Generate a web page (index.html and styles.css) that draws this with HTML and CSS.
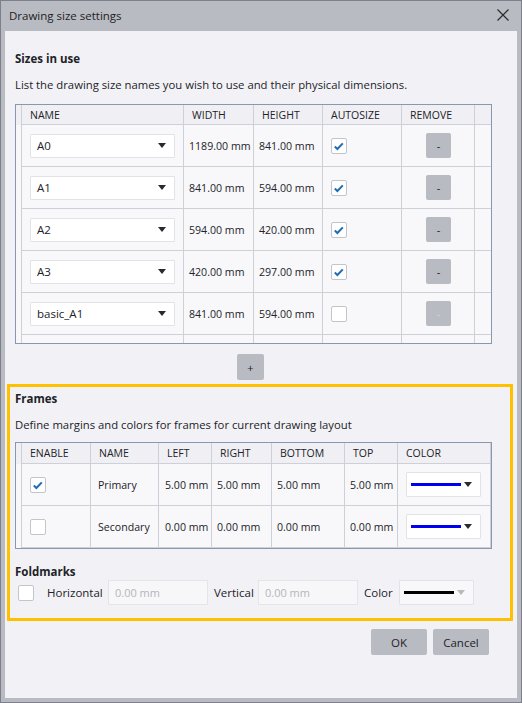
FILE: index.html
```html
<!DOCTYPE html>
<html>
<head>
<meta charset="utf-8">
<link rel="stylesheet" href="styles.css">
</head>
<body>
<div class="window">
  <div class="titlebar">
    <span class="title">Drawing size settings</span>
    <svg class="close" width="12" height="12" viewBox="0 0 12 12"><path d="M0.5 0.5 L11.5 11.5 M11.5 0.5 L0.5 11.5" stroke="#2b2b2b" stroke-width="1.2" fill="none"/></svg>
  </div>
  <div class="content">
    <h2 class="heading first">Sizes in use</h2>
    <p class="desc">List the drawing size names you wish to use and their physical dimensions.</p>

    <div class="grid sizes">
      <div class="c gut hd"></div>
      <div class="c hd">NAME</div>
      <div class="c hd">WIDTH</div>
      <div class="c hd">HEIGHT</div>
      <div class="c hd">AUTOSIZE</div>
      <div class="c hd">REMOVE</div>
      <div class="c hd end"></div>

      <div class="c gut"></div>
      <div class="c sel-cell"><div class="select"><span>A0</span><i class="caret"></i></div></div>
      <div class="c val">1189.00 mm</div>
      <div class="c val">841.00 mm</div>
      <div class="c chk-cell"><span class="chk"><svg width="16" height="16" viewBox="0 0 16 16"><path d="M3.8 8.6 L6.4 11 L11.8 5.4" stroke="#1f6db3" stroke-width="2" fill="none"/></svg></span></div>
      <div class="c btn-cell"><span class="btn rm">-</span></div>
      <div class="c end"></div>

      <div class="c gut"></div>
      <div class="c sel-cell"><div class="select"><span>A1</span><i class="caret"></i></div></div>
      <div class="c val">841.00 mm</div>
      <div class="c val">594.00 mm</div>
      <div class="c chk-cell"><span class="chk"><svg width="16" height="16" viewBox="0 0 16 16"><path d="M3.8 8.6 L6.4 11 L11.8 5.4" stroke="#1f6db3" stroke-width="2" fill="none"/></svg></span></div>
      <div class="c btn-cell"><span class="btn rm">-</span></div>
      <div class="c end"></div>

      <div class="c gut"></div>
      <div class="c sel-cell"><div class="select"><span>A2</span><i class="caret"></i></div></div>
      <div class="c val">594.00 mm</div>
      <div class="c val">420.00 mm</div>
      <div class="c chk-cell"><span class="chk"><svg width="16" height="16" viewBox="0 0 16 16"><path d="M3.8 8.6 L6.4 11 L11.8 5.4" stroke="#1f6db3" stroke-width="2" fill="none"/></svg></span></div>
      <div class="c btn-cell"><span class="btn rm">-</span></div>
      <div class="c end"></div>

      <div class="c gut"></div>
      <div class="c sel-cell"><div class="select"><span>A3</span><i class="caret"></i></div></div>
      <div class="c val">420.00 mm</div>
      <div class="c val">297.00 mm</div>
      <div class="c chk-cell"><span class="chk"><svg width="16" height="16" viewBox="0 0 16 16"><path d="M3.8 8.6 L6.4 11 L11.8 5.4" stroke="#1f6db3" stroke-width="2" fill="none"/></svg></span></div>
      <div class="c btn-cell"><span class="btn rm">-</span></div>
      <div class="c end"></div>

      <div class="c gut"></div>
      <div class="c sel-cell"><div class="select"><span>basic_A1</span><i class="caret"></i></div></div>
      <div class="c val">841.00 mm</div>
      <div class="c val">594.00 mm</div>
      <div class="c chk-cell"><span class="chk"></span></div>
      <div class="c btn-cell"><span class="btn rm disabled">-</span></div>
      <div class="c end"></div>

      <div class="c gut fill"></div>
      <div class="c fill"></div>
      <div class="c fill"></div>
      <div class="c fill"></div>
      <div class="c fill"></div>
      <div class="c fill"></div>
      <div class="c fill end"></div>
    </div>

    <div class="add-row"><span class="btn add">+</span></div>

    <div class="frames">
      <h2 class="heading">Frames</h2>
      <p class="desc">Define margins and colors for frames for current drawing layout</p>

      <div class="grid framegrid">
        <div class="c gut hd"></div>
        <div class="c hd">ENABLE</div>
        <div class="c hd">NAME</div>
        <div class="c hd">LEFT</div>
        <div class="c hd">RIGHT</div>
        <div class="c hd">BOTTOM</div>
        <div class="c hd">TOP</div>
        <div class="c hd end">COLOR</div>

        <div class="c gut"></div>
        <div class="c chk-cell"><span class="chk"><svg width="16" height="16" viewBox="0 0 16 16"><path d="M3.8 8.6 L6.4 11 L11.8 5.4" stroke="#1f6db3" stroke-width="2" fill="none"/></svg></span></div>
        <div class="c val name">Primary</div>
        <div class="c val v6">5.00 mm</div>
        <div class="c val">5.00 mm</div>
        <div class="c val">5.00 mm</div>
        <div class="c val">5.00 mm</div>
        <div class="c end color-cell"><div class="colorsel"><i class="swatch blue"></i><i class="caret"></i></div></div>

        <div class="c gut last"></div>
        <div class="c chk-cell last"><span class="chk"></span></div>
        <div class="c val name last">Secondary</div>
        <div class="c val v6 last">0.00 mm</div>
        <div class="c val last">0.00 mm</div>
        <div class="c val last">0.00 mm</div>
        <div class="c val last">0.00 mm</div>
        <div class="c end color-cell last"><div class="colorsel"><i class="swatch blue"></i><i class="caret"></i></div></div>
      </div>

      <h2 class="heading fold">Foldmarks</h2>
      <div class="foldrow">
        <span class="chk fchk"></span>
        <span class="lbl l-h">Horizontal</span>
        <span class="input">0.00 mm</span>
        <span class="lbl l-v">Vertical</span>
        <span class="input">0.00 mm</span>
        <span class="lbl l-c">Color</span>
        <div class="colorsel fsel"><i class="swatch black"></i><i class="caret light"></i></div>
      </div>
    </div>

    <div class="actions">
      <span class="btn act">OK</span>
      <span class="btn act">Cancel</span>
    </div>
  </div>
</div>
</body>
</html>
```

FILE: styles.css
```css
* { box-sizing: border-box; }
html, body { margin: 0; padding: 0; }
body {
  font-family: "Open Sans", "Noto Sans", "DejaVu Sans", sans-serif;
  font-size: 11px;
  color: #222228;
  background: #b9bbc3;
}
.window {
  width: 522px;
  height: 703px;
  border: 1px solid #7d808a;
  background: #b9bbc3;
  padding: 0 4px 4px 4px;
  display: flex;
  flex-direction: column;
}
.titlebar {
  height: 30px;
  display: flex;
  align-items: center;
  justify-content: space-between;
  padding: 0 8px 0 4px;
}
.title { font-size: 11.5px; color: #1e1e22; margin-top: -1px; }
.close { margin-top: -2px; }
.content {
  flex: 1;
  background: #f2f2f6;
  padding: 0 0 0 10px;
  display: flex;
  flex-direction: column;
}
.heading {
  margin: 0;
  font-size: 11.5px;
  font-weight: 700;
  line-height: 16px;
  height: 16px;
}
.heading.first { margin-top: 20px; }
.desc {
  margin: 10px 0 0 0;
  line-height: 16px;
  height: 16px;
  font-size: 11.3px;
  white-space: nowrap;
}
.grid {
  display: grid;
  width: 477px;
  border: 1px solid #8799b0;
  background: #f8f8fa;
}
.sizes {
  margin-top: 11px;
  grid-template-columns: 6px 162px 70px 69px 79px 73px 16px;
  grid-template-rows: 20px repeat(5, 42px) 8px;
}
.framegrid {
  margin-top: 9px;
  grid-template-columns: 6px 69px 68px 53px 60px 73px 53px 93px;
  grid-template-rows: 21px 42px 42px;
}
.c {
  border-right: 1px solid #cdd0d7;
  border-bottom: 1px solid #cdd0d7;
  display: flex;
  align-items: center;
  white-space: nowrap;
}
.c.gut { border-bottom: none; }
.c.hd {
  background: #f0f0f4;
  padding-left: 8px;
  font-size: 10.5px;
  color: #222228;
}
.c.gut.hd { padding-left: 0; }
.c.end { border-right: none; }
.framegrid .c.end { border-right: 1px solid #cdd0d7; }
.c.fill { border-bottom: none; }
.c.val { padding-left: 5px; font-size: 10.6px; }
.c.val.v6 { padding-left: 6px; }
.c.val.name { padding-left: 7px; }
.sel-cell { padding-left: 8px; }
.select {
  width: 145px;
  height: 24px;
  background: #fff;
  border: 1px solid #e2e2e8;
  border-radius: 1px;
  display: flex;
  align-items: center;
  justify-content: space-between;
  padding: 0 8px 0 6px;
  font-size: 11.5px;
}
.caret {
  display: block;
  width: 0;
  height: 0;
  border-left: 4.5px solid transparent;
  border-right: 4.5px solid transparent;
  border-top: 5.5px solid #2a2a2e;
}
.caret.light { border-top-color: #b8b8be; }
.chk-cell { padding-left: 8px; }
.chk {
  display: block;
  width: 16px;
  height: 16px;
  background: #fff;
  border: 1px solid #c2c5cc;
  border-radius: 2px;
  position: relative;
}
.chk svg { position: absolute; left: -1px; top: -1px; }
.btn-cell { justify-content: center; padding-left: 1px; }
.btn {
  display: flex;
  align-items: center;
  justify-content: center;
  background: #b9bbc3;
  border-radius: 2px;
  color: #222228;
}
.btn.rm { width: 25px; height: 25px; font-size: 11px; }
.btn.rm.disabled { color: #d4d5da; }
.add-row {
  display: flex;
  padding-left: 222px;
  margin-top: 10px;
}
.btn.add { width: 27px; height: 26px; font-size: 11px; }
.frames {
  margin: 4px 4px 0 -8px;
  border: 3px solid #ffc000;
  padding: 4px 0 13px 5px;
  display: flex;
  flex-direction: column;
}
.color-cell { padding-left: 8px; }
.colorsel {
  width: 75px;
  height: 25px;
  background: #fff;
  border: 1px solid #e2e2e8;
  border-radius: 1px;
  display: flex;
  align-items: center;
  padding-left: 4px;
}
.swatch { display: block; width: 50px; height: 3px; margin-right: 3px; }
.swatch.blue { background: #0000f0; }
.swatch.black { background: #000; }
.heading.fold { margin-top: 15px; }
.foldrow {
  display: flex;
  align-items: center;
  height: 25px;
}
.fchk { margin-left: 3px; }
.lbl { font-size: 11.5px; }
.l-h { margin-left: 13px; width: 61px; }
.l-v { margin-left: 6px; width: 44px; }
.l-c { margin-left: 6px; width: 35px; }
.input {
  width: 100px;
  height: 25px;
  background: #f7f7f9;
  border: 1px solid #e4e4e9;
  display: flex;
  align-items: center;
  padding-left: 6px;
  color: #b5b5bb;
  font-size: 11px;
}
.fsel { background: #f8f8fa; }
.actions {
  display: flex;
  justify-content: flex-end;
  gap: 6px;
  margin-top: 8px;
  padding-right: 28px;
}
.btn.act { width: 56px; height: 26px; font-size: 11.5px; }
```
